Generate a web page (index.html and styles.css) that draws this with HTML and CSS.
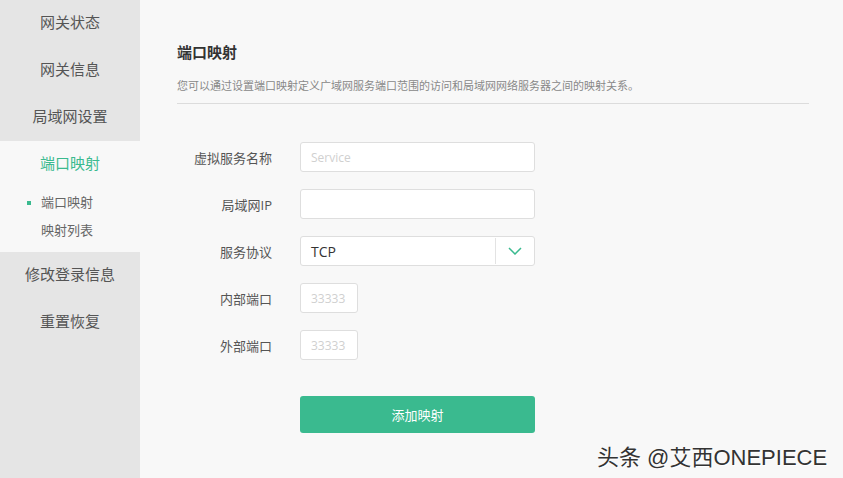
FILE: index.html
```html
<!DOCTYPE html>
<html lang="zh-CN">
<head>
    <meta charset="UTF-8">
    <meta name="viewport" content="width=device-width, initial-scale=1.0">
    <title>端口映射</title>
    <link rel="stylesheet" href="styles.css">
</head>
<body>
    <div class="page">
        <!-- Menu de gauche -->
        <div class="sidebar">
            <div class="nav-item">网关状态</div>
            <div class="nav-item">网关信息</div>
            <div class="nav-item">局域网设置</div>
            <div class="nav-group">
                <div class="nav-item active">端口映射</div>
                <div class="sub-item current">端口映射</div>
                <div class="sub-item">映射列表</div>
            </div>
            <div class="nav-item">修改登录信息</div>
            <div class="nav-item">重置恢复</div>
        </div>

        <div class="main">
            <h2>端口映射</h2>
            <p class="desc">您可以通过设置端口映射定义广域网服务端口范围的访问和局域网网络服务器之间的映射关系。</p>

            <form class="form" id="mapForm">
                <div class="form-row">
                    <label for="service">虚拟服务名称</label>
                    <input type="text" id="service" placeholder="Service">
                </div>
                <div class="form-row">
                    <label for="lanIp">局域网IP</label>
                    <input type="text" id="lanIp">
                </div>
                <div class="form-row">
                    <label for="proto">服务协议</label>
                    <div class="select">
                        <span class="select-value">TCP</span>
                        <span class="select-arrow">
                            <svg width="14" height="8" viewBox="0 0 14 8"><path d="M1 1 L7 7 L13 1" fill="none" stroke="#3aba8f" stroke-width="1.5"/></svg>
                        </span>
                    </div>
                </div>
                <div class="form-row">
                    <label for="inPort">内部端口</label>
                    <input type="text" id="inPort" class="port" placeholder="33333">
                </div>
                <div class="form-row">
                    <label for="outPort">外部端口</label>
                    <input type="text" id="outPort" class="port" placeholder="33333">
                </div>
                <div class="form-row actions">
                    <button type="button">添加映射</button>
                </div>
            </form>
        </div>
    </div>
    <div class="watermark">头条 @艾西ONEPIECE</div>
</body>
</html>
```

FILE: styles.css
```css
body {
    margin: 0;
    font-family: "Open Sans", "Noto Sans CJK SC", sans-serif;
    background-color: #f8f8f8;
    color: #555;
}
.page {
    display: flex;
    height: 478px;
}
.sidebar {
    width: 140px;
    flex-shrink: 0;
    background-color: #e5e5e5;
}
.nav-item {
    height: 47px;
    line-height: 45px;
    text-align: center;
    font-size: 15px;
    color: #555;
}
.nav-group {
    background-color: #f8f8f8;
    padding-bottom: 8px;
}
.nav-item.active {
    color: #3aba8f;
}
.sub-item {
    position: relative;
    height: 28px;
    line-height: 28px;
    padding-left: 41px;
    font-size: 13px;
    color: #666;
}
.sub-item.current::before {
    content: "";
    position: absolute;
    left: 27px;
    top: 13px;
    width: 4px;
    height: 4px;
    background-color: #3aba8f;
}
.main {
    flex: 1;
    padding: 41px 34px 0 37px;
}
h2 {
    margin: 0;
    font-size: 15px;
    font-weight: bold;
    color: #333;
    line-height: 22px;
}
.desc {
    margin: 15px 0 0;
    font-size: 11px;
    color: #888;
    line-height: 16px;
    padding-bottom: 9px;
    border-bottom: 1px solid #dcdcdc;
}
.form {
    margin-top: 38px;
    display: flex;
    flex-direction: column;
    gap: 17px;
}
.form-row {
    display: flex;
    align-items: center;
}
.form-row label {
    width: 95px;
    text-align: right;
    margin-right: 28px;
    font-size: 13px;
    color: #555;
}
input[type="text"] {
    box-sizing: border-box;
    width: 235px;
    height: 30px;
    border: 1px solid #dedede;
    border-radius: 3px;
    background: #fff;
    padding: 0 10px;
    font-family: "Open Sans", "Noto Sans CJK SC", sans-serif;
    font-size: 12px;
    outline: none;
}
input::placeholder {
    color: #d0d0d0;
}
input.port {
    width: 58px;
}
.select {
    box-sizing: border-box;
    width: 235px;
    height: 30px;
    border: 1px solid #dedede;
    border-radius: 3px;
    background: #fff;
    display: flex;
    align-items: center;
}
.select-value {
    flex: 1;
    padding-left: 10px;
    font-size: 14px;
    color: #333;
}
.select-arrow {
    width: 38px;
    height: 26px;
    border-left: 1px solid #e3e3e3;
    display: flex;
    align-items: center;
    justify-content: center;
}
.actions {
    margin-top: 19px;
    padding-left: 123px;
}
button {
    width: 235px;
    height: 37px;
    border: none;
    border-radius: 3px;
    background-color: #3aba8f;
    color: #fff;
    font-family: "Open Sans", "Noto Sans CJK SC", sans-serif;
    font-size: 13px;
    cursor: pointer;
}
.watermark {
    position: absolute;
    left: 597px;
    top: 439px;
    font-family: "Liberation Sans", "Noto Sans CJK SC", sans-serif;
    font-size: 22px;
    color: #333;
    text-shadow: 1px 1px 0 #fff;
}
```
